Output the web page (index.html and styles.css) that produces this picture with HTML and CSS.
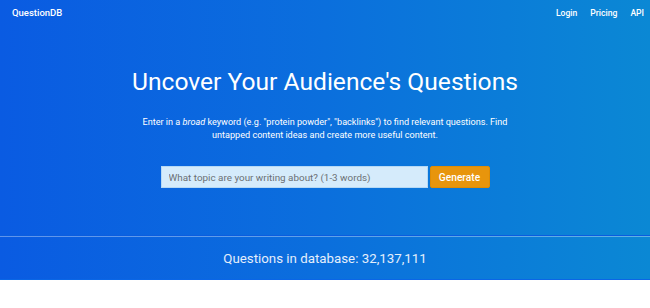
FILE: index.html
```html
<!DOCTYPE html>
<html>
<head>
<meta charset="utf-8">
<link rel="stylesheet" href="styles.css">
</head>
<body>
<div class="hero">
  <header class="nav">
    <a class="brand">QuestionDB</a>
    <nav class="links">
      <a>Login</a>
      <a>Pricing</a>
      <a>API</a>
    </nav>
  </header>
  <section class="main">
    <h1 class="title">Uncover Your Audience's Questions</h1>
    <p class="lead">Enter in a <em>broad</em> keyword (e.g. "protein powder", "backlinks") to find relevant questions. Find<br>untapped content ideas and create more useful content.</p>
    <form class="search">
      <input class="field" type="text" placeholder="What topic are your writing about? (1-3 words)">
      <button class="btn" type="button">Generate</button>
    </form>
  </section>
  <section class="stats">Questions in database: 32,137,111</section>
</div>
</body>
</html>
```
FILE: styles.css
```css
html, body { margin: 0; padding: 0; background: #fff; }
body { font-family: Roboto, "Liberation Sans", sans-serif; color: #fff; }
.hero {
  background: linear-gradient(90deg, #0a5be2 0%, #0b6fdd 50%, #0b88d4 100%);
  border-bottom: 1px solid #0a66e6;
}
.nav {
  height: 25px;
  display: flex;
  align-items: center;
  justify-content: space-between;
  padding: 0 6px 0 12px;
}
.brand { font-size: 9.5px; font-weight: 500; }
.links { display: flex; gap: 13px; font-size: 8.6px; font-weight: 500; }
.main {
  height: 211px;
  display: flex;
  flex-direction: column;
  align-items: center;
  box-sizing: border-box;
  padding-top: 41px;
  border-bottom: 1px solid #0a5ddf;
}
.title {
  margin: 0;
  font-size: 24.6px;
  line-height: 32px;
  font-weight: 400;
}
.lead {
  margin: 18px 0 0;
  font-size: 9.1px;
  line-height: 12.5px;
  text-align: center;
}
.search {
  margin-top: 25px;
  display: flex;
  gap: 2px;
}
.field {
  width: 267px;
  height: 22px;
  box-sizing: border-box;
  border: 1px solid #b6d9f5;
  background: #d5ebfb;
  padding: 0 7px;
  font-family: inherit;
  font-size: 9.9px;
  color: #555;
  outline: none;
}
.field::placeholder { color: #6b6f73; }
.btn {
  width: 60px;
  height: 22px;
  border: 1px solid #df8c05;
  border-radius: 2px;
  background: #e8950c;
  color: #fff;
  font-family: inherit;
  font-size: 10.2px;
  font-weight: 500;
  padding: 0;
}
.stats {
  border-top: 1px solid rgba(255,255,255,0.35);
  height: 42px;
  display: flex;
  align-items: center;
  justify-content: center;
  font-size: 13.3px;
  color: #e4eefb;
}
```
